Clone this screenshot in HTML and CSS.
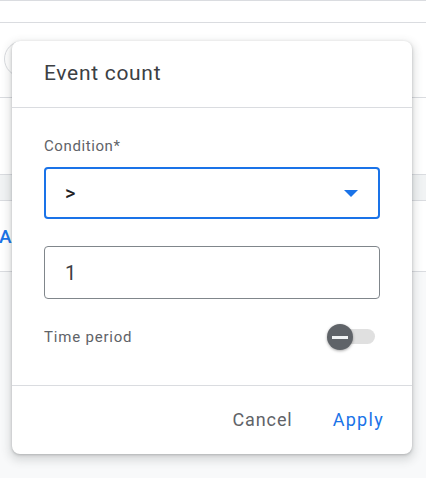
FILE: index.html
```html
<!DOCTYPE html>
<html>
<head>
<meta charset="utf-8">
<link rel="stylesheet" href="styles.css">
</head>
<body>
<div class="page">
  <div class="band band-a"></div>
  <div class="band band-b"><div class="chip"></div></div>
  <div class="band band-c"></div>
  <div class="band band-d"></div>
  <div class="band band-e"><span class="add-link">Add</span></div>
  <div class="band band-f"></div>

  <div class="dialog">
    <div class="dialog-header">
      <h2 class="dialog-title">Event count</h2>
    </div>
    <div class="dialog-body">
      <div class="field-label">Condition*</div>
      <div class="select focused">
        <span class="select-value">&gt;</span>
        <svg class="select-arrow" width="14" height="7" viewBox="0 0 14 7"><path d="M0 0 L14 0 L7 7 Z" fill="#1a73e8"/></svg>
      </div>
      <div class="text-input"><span class="input-value">1</span></div>
      <div class="toggle-row">
        <span class="toggle-label">Time period</span>
        <span class="toggle">
          <span class="toggle-track"></span>
          <span class="toggle-thumb"><span class="toggle-dash"></span></span>
        </span>
      </div>
    </div>
    <div class="dialog-footer">
      <button class="btn btn-cancel">Cancel</button>
      <button class="btn btn-apply">Apply</button>
    </div>
  </div>
</div>
</body>
</html>
```
FILE: styles.css
```css
html, body {
  margin: 0;
  padding: 0;
}
body {
  width: 426px;
  height: 478px;
  overflow: hidden;
  font-family: Roboto, "Liberation Sans", sans-serif;
  background: #f8f9fa;
}
.page {
  position: relative;
  width: 426px;
  height: 478px;
  display: flex;
  flex-direction: column;
}
.band {
  background: #ffffff;
  border-bottom: 1px solid #dadce0;
  flex: none;
}
.band-a {
  height: 21px;
  border-top: 1px solid #dadce0;
}
.band-b {
  height: 75px;
  padding-top: 18px;
  box-sizing: border-box;
}
.chip {
  margin-left: 4px;
  width: 200px;
  height: 36px;
  box-sizing: border-box;
  border: 1px solid #dadce0;
  border-radius: 18px;
}
.band-c {
  height: 76px;
}
.band-d {
  height: 25px;
  background: #f1f3f4;
}
.band-e {
  height: 70px;
  display: flex;
  align-items: center;
}
.add-link {
  margin-left: -1px;
  font-size: 19px;
  font-weight: 500;
  color: #1a73e8;
  letter-spacing: 0.5px;
}
.band-f {
  flex: 1;
  background: #f8f9fa;
  border-bottom: none;
}

.dialog {
  position: absolute;
  top: 41px;
  left: 12px;
  width: 400px;
  height: 413px;
  background: #ffffff;
  border-radius: 8px;
  box-shadow: 0 1px 3px rgba(60, 64, 67, 0.3), 0 4px 8px 3px rgba(60, 64, 67, 0.15);
  display: flex;
  flex-direction: column;
}
.dialog-header {
  height: 64px;
  padding: 0 32px 2px;
  border-bottom: 1px solid #dadce0;
  display: flex;
  align-items: center;
}
.dialog-title {
  margin: 0;
  font-size: 21px;
  font-weight: 400;
  color: #3c4043;
  letter-spacing: 0.7px;
  line-height: 24px;
}
.dialog-body {
  flex: 1;
  padding: 28px 32px 0;
  display: flex;
  flex-direction: column;
}
.field-label {
  font-size: 15px;
  line-height: 20px;
  color: #5f6368;
  letter-spacing: 0.6px;
}
.select {
  margin-top: 11px;
  height: 52px;
  box-sizing: border-box;
  border: 2px solid #1a73e8;
  border-radius: 4px;
  display: flex;
  align-items: center;
  padding: 0 20px 0 19px;
}
.select-value {
  flex: 1;
  font-size: 20px;
  font-weight: 500;
  color: #202124;
}
.select-arrow {
  display: block;
}
.text-input {
  margin-top: 27px;
  height: 53px;
  box-sizing: border-box;
  border: 1px solid #80868b;
  border-radius: 4px;
  display: flex;
  align-items: center;
  padding: 0 20px;
}
.input-value {
  font-size: 20px;
  color: #3c4043;
}
.toggle-row {
  margin-top: 23px;
  height: 30px;
  display: flex;
  align-items: center;
  justify-content: space-between;
  padding-right: 5px;
}
.toggle-label {
  font-size: 15px;
  color: #5f6368;
  letter-spacing: 0.8px;
}
.toggle {
  position: relative;
  width: 48px;
  height: 26px;
  display: flex;
  align-items: center;
}
.toggle-track {
  position: absolute;
  left: 7px;
  right: 0;
  top: 5px;
  height: 15px;
  border-radius: 8px;
  background: #e0e0e0;
}
.toggle-thumb {
  position: absolute;
  left: 0;
  top: 0;
  width: 26px;
  height: 26px;
  border-radius: 50%;
  background: #5f6368;
  box-shadow: 0 1px 3px rgba(0, 0, 0, 0.35);
  display: flex;
  align-items: center;
  justify-content: center;
}
.toggle-dash {
  width: 16px;
  height: 3px;
  background: #f1f3f4;
}
.dialog-footer {
  height: 68px;
  border-top: 1px solid #dadce0;
  display: flex;
  align-items: center;
  justify-content: flex-end;
  gap: 24px;
  padding-right: 20px;
}
.btn {
  border: none;
  background: none;
  padding: 0 8px;
  margin: 0;
  font-family: Roboto, "Liberation Sans", sans-serif;
  font-size: 18px;
  line-height: 36px;
  cursor: pointer;
}
.btn-cancel {
  color: #5f6368;
  letter-spacing: 0.9px;
}
.btn-apply {
  color: #1a73e8;
  letter-spacing: 1.3px;
}
```
